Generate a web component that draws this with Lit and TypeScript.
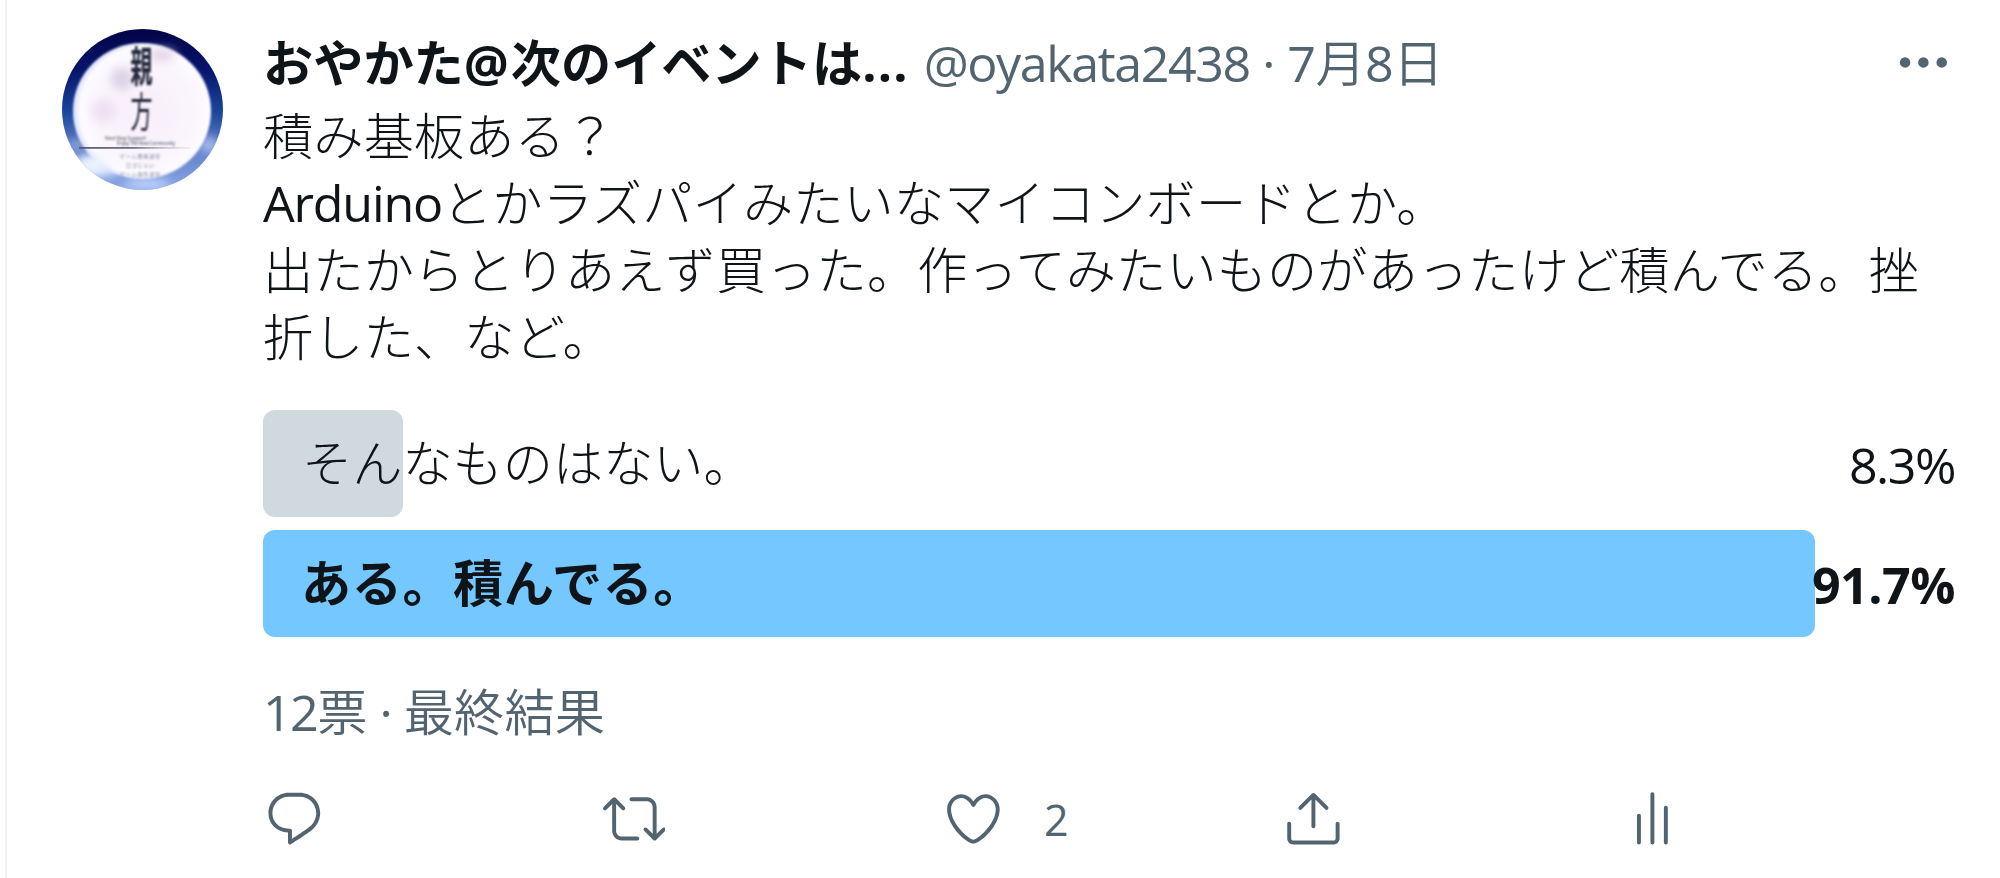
import { LitElement, html, css, svg } from "lit";
import { customElement } from "lit/decorators.js";

const ICONS = {
  reply: "M14.046 2.242l-4.148-.01h-.002c-4.374 0-7.8 3.427-7.8 7.802 0 4.098 3.186 7.206 7.465 7.37v3.828c0 .108.044.286.12.403.142.225.384.347.632.347.138 0 .277-.038.402-.118.264-.168 6.473-4.14 8.088-5.506 1.902-1.61 3.04-3.97 3.043-6.312v-.017c-.006-4.367-3.43-7.787-7.8-7.788zm3.787 12.972c-1.134.96-4.862 3.405-6.772 4.643V16.67c0-.414-.335-.75-.75-.75h-.396c-3.66 0-6.318-2.476-6.318-5.886 0-3.534 2.768-6.302 6.3-6.302l4.147.01h.002c3.532 0 6.3 2.766 6.302 6.296-.003 1.91-.942 3.844-2.514 5.176z",
  retweet: "M23.77 15.67c-.292-.293-.767-.293-1.06 0l-2.22 2.22V7.65c0-2.068-1.683-3.75-3.75-3.75h-5.85c-.414 0-.75.336-.75.75s.336.75.75.75h5.85c1.24 0 2.25 1.01 2.25 2.25v10.24l-2.22-2.22c-.293-.293-.768-.293-1.06 0s-.294.768 0 1.06l3.5 3.5c.145.147.337.22.53.22s.383-.072.53-.22l3.5-3.5c.294-.292.294-.767 0-1.06zm-10.66 3.28H7.26c-1.24 0-2.25-1.01-2.25-2.25V6.46l2.22 2.22c.148.147.34.22.532.22s.384-.073.53-.22c.293-.293.293-.768 0-1.06l-3.5-3.5c-.293-.294-.768-.294-1.06 0l-3.5 3.5c-.294.292-.294.767 0 1.06s.767.293 1.06 0l2.22-2.22V16.7c0 2.068 1.683 3.75 3.75 3.75h5.85c.414 0 .75-.336.75-.75s-.337-.75-.75-.75z",
  like: "M12 21.638h-.014C9.403 21.59 1.95 14.856 1.95 8.478c0-3.064 2.525-5.754 5.403-5.754 2.29 0 3.83 1.58 4.646 2.73.814-1.148 2.354-2.73 4.645-2.73 2.88 0 5.404 2.69 5.404 5.755 0 6.376-7.454 13.11-10.037 13.157H12zM7.354 4.225c-2.08 0-3.903 1.988-3.903 4.255 0 5.74 7.034 11.596 8.55 11.658 1.518-.062 8.55-5.917 8.55-11.658 0-2.267-1.823-4.255-3.903-4.255-2.528 0-3.94 2.936-3.952 2.965-.23.562-1.156.562-1.387 0-.014-.03-1.425-2.965-3.954-2.965z",
  share: "M17.53 7.47l-5-5c-.293-.293-.768-.293-1.06 0l-5 5c-.294.293-.294.768 0 1.06s.767.294 1.06 0l3.72-3.72V15c0 .414.336.75.75.75s.75-.336.75-.75V4.81l3.72 3.72c.146.147.338.22.53.22s.384-.072.53-.22c.293-.293.293-.767 0-1.06z M19.708 21.944H4.292C3.028 21.944 2 20.916 2 19.652V14c0-.414.336-.75.75-.75s.75.336.75.75v5.652c0 .437.355.792.792.792h15.416c.437 0 .792-.355.792-.792V14c0-.414.336-.75.75-.75s.75.336.75.75v5.652c0 1.264-1.028 2.292-2.292 2.292z",
  stats: "M12 22c-.414 0-.75-.336-.75-.75V2.75c0-.414.336-.75.75-.75s.75.336.75.75v18.5c0 .414-.336.75-.75.75zm5.14 0c-.415 0-.75-.336-.75-.75V7.89c0-.415.335-.75.75-.75s.75.335.75.75v13.36c0 .414-.337.75-.75.75zM6.86 22c-.413 0-.75-.336-.75-.75V10.973c0-.414.337-.75.75-.75s.75.336.75.75V21.25c0 .414-.335.75-.75.75z",
};

const icon = (d: string) => html`<svg class="icon" viewBox="0 0 24 24">${svg`<path d=${d} />`}</svg>`;

@customElement("user-avatar")
class UserAvatar extends LitElement {
  static styles = css`
    :host { display: block; width: 161px; height: 161px; }
    svg { display: block; width: 100%; height: 100%; }
    text { font-family: "Noto Sans CJK JP", sans-serif; }
  `;
  render() {
    return html`<svg viewBox="0 0 161 161">
      <defs>
        <linearGradient id="ring" x1="0" y1="0" x2="0" y2="1">
          <stop offset="0" stop-color="#030447" />
          <stop offset=".25" stop-color="#06146b" />
          <stop offset=".52" stop-color="#1b479c" />
          <stop offset=".72" stop-color="#5c7cc6" />
          <stop offset="1" stop-color="#8aa5e4" />
        </linearGradient>
        <radialGradient id="disc" cx=".52" cy=".5" r=".5">
          <stop offset="0" stop-color="#f8eff9" />
          <stop offset=".7" stop-color="#faf5fc" />
          <stop offset=".94" stop-color="#fdfbff" />
          <stop offset="1" stop-color="#e4e8fa" />
        </radialGradient>
        <linearGradient id="rule" x1="0" x2="1">
          <stop offset="0" stop-color="#555a78" />
          <stop offset=".5" stop-color="#77788c" />
          <stop offset="1" stop-color="#d8d5d8" stop-opacity=".3" />
        </linearGradient>
        <filter id="soft" x="-50%" y="-50%" width="200%" height="200%"><feGaussianBlur stdDeviation="5" /></filter>
        <filter id="slight"><feGaussianBlur stdDeviation=".8" /></filter>
        <clipPath id="round"><circle cx="80.5" cy="80.5" r="80.5" /></clipPath>
      </defs>
      <g clip-path="url(#round)">
        <rect width="161" height="161" fill="url(#ring)" />
        <g filter="url(#soft)">
          <ellipse cx="36" cy="139" rx="24" ry="9" fill="#dfe9ff" />
          <ellipse cx="85" cy="155" rx="24" ry="5" fill="#c5d8ff" />
          <ellipse cx="147" cy="116" rx="9" ry="8" fill="#aabcf0" />
          <ellipse cx="14" cy="116" rx="7" ry="4" fill="#a5b8e6" />
        </g>
        <ellipse cx="80" cy="82" rx="69" ry="68" fill="url(#disc)" filter="url(#slight)" />
        <g filter="url(#soft)">
          <ellipse cx="60" cy="50" rx="11" ry="11" fill="#ddd1e6" />
          <ellipse cx="42" cy="82" rx="12" ry="12" fill="#efdff3" />
          <ellipse cx="100" cy="26" rx="13" ry="6" fill="#e4d2e6" />
          <ellipse cx="30" cy="134" rx="15" ry="8" fill="#edf3ff" />
        </g>
        <g filter="url(#slight)" fill="#23273b" text-anchor="middle">
          <text font-size="22" font-weight="700" transform="translate(79.5 53) scale(1 1.9)">親</text>
          <text font-size="22" font-weight="400" transform="translate(79.5 98) scale(1 1.85)">方</text>
        </g>
        <rect x="17" y="118" width="112" height="1.8" fill="url(#rule)" />
        <g fill="#4d5068" font-size="5" filter="url(#slight)">
          <text x="43" y="111" textLength="41">Next Step Support</text>
          <text x="55" y="116" textLength="58">Enjoy The New Community</text>
          <text x="58" y="129" textLength="40" fill="#77788f">ゲーム開発部日</text>
          <text x="64" y="138" textLength="28" fill="#77788f">ロゴじぇい</text>
          <text x="58" y="147" textLength="40" fill="#77788f">ゲーム制作部日</text>
        </g>
      </g>
    </svg>`;
  }
}

@customElement("app-root")
class AppRoot extends LitElement {
  static styles = css`
    :host {
      display: block; box-sizing: border-box; height: 878px; overflow: hidden;
      background: #fff; color: #0f1419; padding-left: 5px;
      font-family: "Open Sans", "Noto Sans CJK JP", sans-serif;
      font-size: 50.2px; line-height: 67px; white-space: nowrap;
    }
    .tweet {
      display: flex; box-sizing: border-box; height: 100%;
      border-left: 2px solid #eff3f4; padding: 29px 45px 0 55px; gap: 40px;
    }
    .main { flex: 1; min-width: 0; }
    .head { display: flex; align-items: center; height: 67px; margin-bottom: 6px; }
    .name { font-weight: 700; }
    .at { letter-spacing: 2px; }
    .dots { letter-spacing: 1.2px; }
    .meta { color: #536471; margin-left: 15px; font-weight: 375; }
    .handle { letter-spacing: -1.4px; }
    .date { letter-spacing: -.6px; }
    .more { margin-left: auto; width: 62.8px; height: 62.8px; fill: #536471; }
    .icon { width: 62.8px; height: 62.8px; fill: #536471; display: block; }
    .body { font-weight: 300; letter-spacing: .14px; }
    .latin { letter-spacing: -1.2px; font-weight: 375; }
    .jp { font-weight: 350; }
    .poll { display: grid; gap: 13px; margin-top: 40px; }
    .row { display: grid; height: 107px; align-items: center; }
    .bar { grid-area: 1 / 1; height: 107px; border-radius: 12px; background: #cfd9de; }
    .lead .bar { background: #74c8ff; }
    .label { grid-area: 1 / 1; display: flex; justify-content: space-between; padding-left: 39px; font-weight: 300; margin-top: -2px; }
    .pct { font-weight: 375; letter-spacing: -1.5px; padding-top: 2px; margin-bottom: -2px; }
    .lead .label, .lead .pct { font-weight: 700; }
    .lead .label { padding-left: 38px; letter-spacing: .5px; }
    .lead .pct { letter-spacing: -.5px; }
    .votes { color: #536471; margin-top: 41px; font-weight: 375; letter-spacing: -1px; }
    .votes .jp { letter-spacing: .14px; }
    .votes .count { letter-spacing: -1.6px; }
    .actions { display: grid; grid-template-columns: repeat(5, 339.6px); margin-top: 41.5px; }
    .action { display: flex; align-items: center; height: 62.8px; gap: 39px; color: #536471; font-size: 43px; }
    .likes { padding-top: 4px; font-weight: 375; }
  `;

  private options = [
    { text: "そんなものはない。", pct: 8.3, lead: false },
    { text: "ある。積んでる。", pct: 91.7, lead: true },
  ];

  render() {
    return html`<article class="tweet">
      <user-avatar></user-avatar>
      <div class="main">
        <header class="head">
          <span class="name">おやかた<span class="at">@</span>次のイベントは<span class="dots">...</span></span>
          <span class="meta"><span class="handle">@oyakata2438</span><span class="date"> · 7<span class="jp">月</span>8<span class="jp">日</span></span></span>
          <svg class="more" viewBox="0 0 24 24"><circle cx="5" cy="12" r="2" /><circle cx="12" cy="12" r="2" /><circle cx="19" cy="12" r="2" /></svg>
        </header>
        <div class="body">積み基板ある？</div>
        <div class="body"><span class="latin">Arduino</span>とかラズパイみたいなマイコンボードとか。</div>
        <div class="body">出たからとりあえず買った。作ってみたいものがあったけど積んでる。挫</div>
        <div class="body">折した、など。</div>
        <div class="poll">
          ${this.options.map((o) => html`<div class="row ${o.lead ? "lead" : ""}">
            <div class="bar" style="width:${o.pct}%"></div>
            <div class="label"><span>${o.text}</span><span class="pct">${o.pct}%</span></div>
          </div>`)}
        </div>
        <div class="votes"><span class="count">12</span><span class="jp">票</span> · <span class="jp">最終結果</span></div>
        <footer class="actions">
          <div class="action">${icon(ICONS.reply)}</div>
          <div class="action">${icon(ICONS.retweet)}</div>
          <div class="action">${icon(ICONS.like)}<span class="likes">2</span></div>
          <div class="action">${icon(ICONS.share)}</div>
          <div class="action">${icon(ICONS.stats)}</div>
        </footer>
      </div>
    </article>`;
  }
}
